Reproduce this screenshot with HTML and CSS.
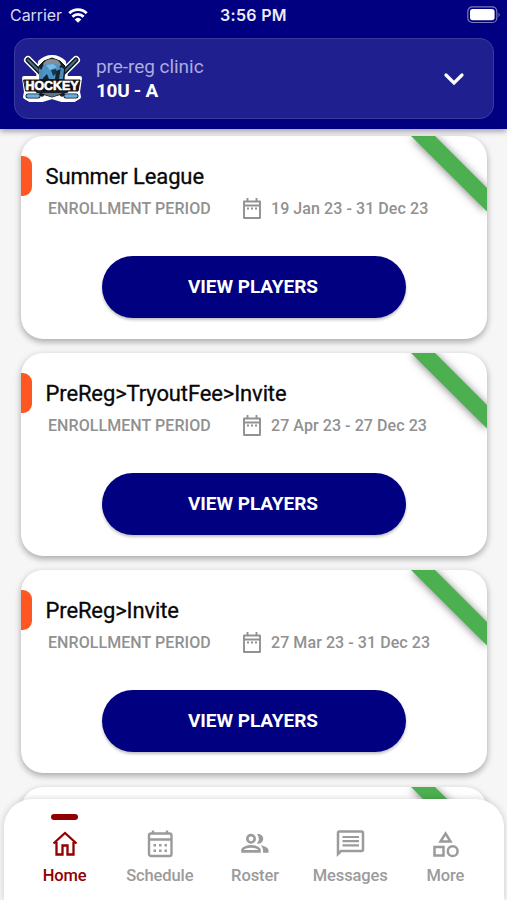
FILE: index.html
```html
<!DOCTYPE html>
<html lang="en">
<head>
<meta charset="utf-8">
<title>Team Home</title>
<link rel="stylesheet" href="styles.css">
</head>
<body>
<svg class="defs" aria-hidden="true">
  <symbol id="ribbon" viewBox="0 0 90 90"><path d="M4 -10 28 -10 100 62 100 85.500Z"/></symbol>
  <symbol id="calendar" viewBox="0 0 18 21"><path d="M1 3.500h16v16.500H1zM1 7.500h16M4.500 3.500V0M13.500 3.500V0" fill="none" stroke="currentColor" stroke-width="1.900" stroke-linejoin="round"/><path d="M4 9.500h2v2H4zM8 9.500h2v2H8zM12 9.500h2v2h-2z" fill="currentColor"/></symbol>
</svg>
<div class="app">
  <header class="header">
    <div class="status">
      <div class="carrier"><span>Carrier</span>
        <svg class="wifi" viewBox="0 0 20 15"><path d="M1.300 5.300a12.300 12.300 0 0 1 17.400 0M4.400 8.700a7.700 7.700 0 0 1 11.200 0" fill="none" stroke="#fff" stroke-width="2.800"/><path d="M6.700 11.400a4.800 4.800 0 0 1 6.600 0L10 14.700z" fill="#fff"/></svg>
      </div>
      <div class="time">3:56 PM</div>
      <svg class="battery" viewBox="0 0 34 18"><rect x=".8" y=".9" width="29" height="15.600" rx="4.500" fill="none" stroke="#7b7bc0" stroke-width="1.200"/><rect x="3" y="3" width="24.600" height="11.300" rx="2.800" fill="#fff"/><path d="M31.500 6.500q2.400 2.300 0 4.600z" fill="#7b7bc0"/></svg>
    </div>
    <div class="team">
      <svg class="logo" viewBox="0 0 62 50">
        <g stroke-linejoin="round" stroke-linecap="round">
          <path d="M7 6 41 40M55 6 21 40" fill="none" stroke="#fff" stroke-width="8"/>
          <path d="M19 8q5-5 12-5t12 5l2 16h14l-2 14 1 5-5 3H41L31 43 21 46H9l-5-3 1-5-2-14h14z" fill="#fff" stroke="#fff" stroke-width="4"/>
          <path d="M7 6 41 40M55 6 21 40M7 42h10M45 42h10" fill="none" stroke="#101820" stroke-width="5"/>
          <path d="M7 6 18 17M55 6 44 17" fill="none" stroke="#417087" stroke-width="2"/>
          <path d="M7 42h10M45 42h10" fill="none" stroke="#68afe0" stroke-width="3.400"/>
          <path d="M18 12 23 7 31 4 39 7 44 12 43 25 47 38 31 43 15 38 19 25z" fill="#17232c" stroke="#101820"/>
          <path d="M22 10q3-5 9-5 7 0 9 6l-3 3H24z" fill="#858f96"/>
          <path d="M22 12q6-4 15-1l3 4-5 2-1 8h-6l-2-5-4 4-2-7z" fill="#4b94c9"/>
          <path d="M25 11l7-1 4 3-7 3z" fill="#7cbce4"/>
          <path d="M30 16l5-1 1 4-4 3z" fill="#16384f"/>
          <path d="M40 13l3 2-1 10h-4zM18 14l4 3v8h-4z" fill="#4b8cb8"/>
          <path d="M20 39h22l-11 4z" fill="#63747e"/>
          <path d="M3 26h56l-2 11H5z" fill="#111" stroke="#111"/>
        </g>
        <text x="31" y="35.500" text-anchor="middle" textLength="53" lengthAdjust="spacingAndGlyphs" class="logo-text">HOCKEY</text>
      </svg>
      <div class="team-copy"><div class="club">pre-reg clinic</div><div class="squad">10U - A</div></div>
      <svg class="chevron" viewBox="0 0 22 14"><path d="M3 3 11 11 19 3" fill="none" stroke="#fff" stroke-width="3.200" stroke-linecap="round"/></svg>
    </div>
  </header>

  <main class="list">
    <article class="card">
      <svg class="ribbon"><use href="#ribbon" width="90" height="90"/></svg>
      <div class="title-row"><i class="marker"></i><h2>Summer League</h2></div>
      <div class="period"><span class="label">ENROLLMENT PERIOD</span><svg class="cal"><use href="#calendar"/></svg><span class="dates">19 Jan 23 - 31 Dec 23</span></div>
      <button class="view">VIEW PLAYERS</button>
    </article>
    <article class="card">
      <svg class="ribbon"><use href="#ribbon" width="90" height="90"/></svg>
      <div class="title-row"><i class="marker"></i><h2>PreReg&gt;TryoutFee&gt;Invite</h2></div>
      <div class="period"><span class="label">ENROLLMENT PERIOD</span><svg class="cal"><use href="#calendar"/></svg><span class="dates">27 Apr 23 - 27 Dec 23</span></div>
      <button class="view">VIEW PLAYERS</button>
    </article>
    <article class="card">
      <svg class="ribbon"><use href="#ribbon" width="90" height="90"/></svg>
      <div class="title-row"><i class="marker"></i><h2>PreReg&gt;Invite</h2></div>
      <div class="period"><span class="label">ENROLLMENT PERIOD</span><svg class="cal"><use href="#calendar"/></svg><span class="dates">27 Mar 23 - 31 Dec 23</span></div>
      <button class="view">VIEW PLAYERS</button>
    </article>
    <article class="card">
      <svg class="ribbon"><use href="#ribbon" width="90" height="90"/></svg>
    </article>
  </main>

  <nav class="tabs">
    <a class="tab active">
      <svg viewBox="0 0 32 32"><path d="M4.500 15.500 16 5l11.500 10.500M7.500 14v12.500h6V17.500h5v9h6V14" fill="none" stroke="currentColor" stroke-width="2.300"/></svg>
      <span>Home</span></a>
    <a class="tab">
      <svg viewBox="0 0 32 32"><rect x="5" y="5.500" width="22.500" height="22.500" rx="2" fill="none" stroke="currentColor" stroke-width="2.400"/><path d="M5 11.500h22.500M9 6V2.500M23 6V2.500" fill="none" stroke="currentColor" stroke-width="2.400"/><path d="M9.500 16H12v2.500H9.500zM15 16h2.500v2.500H15zM20.500 16H23v2.500h-2.500zM9.500 21.500H12V24H9.500zM15 21.500h2.500V24H15zM20.500 21.500H23V24h-2.500z" fill="currentColor"/></svg>
      <span>Schedule</span></a>
    <a class="tab">
      <svg viewBox="0 0 32 32"><circle cx="12" cy="10.800" r="3.700" fill="none" stroke="currentColor" stroke-width="2.600"/><path d="M3.500 23.400v-1.200c0-2.400 5.300-3.800 8.500-3.800s8.500 1.400 8.500 3.800v1.200z" fill="none" stroke="currentColor" stroke-width="2.600"/><path d="M18 15.500a7.500 7.500 0 0 0 0-9.400 4.900 4.900 0 1 1 0 9.400zM21.500 17.200c4 .6 8 2.500 8 5v2.500H24v-2.500c0-2.200-1-3.700-2.500-5z" fill="currentColor"/></svg>
      <span>Roster</span></a>
    <a class="tab">
      <svg viewBox="0 0 32 32"><path d="M4 26V5q0-1.500 1.500-1.500h22Q29 3.500 29 5v16.500q0 1.500-1.500 1.500H7z" fill="none" stroke="currentColor" stroke-width="2.500"/><path d="M8.500 9H25M8.500 13.200H25M8.500 17.400H25" stroke="currentColor" stroke-width="2.200"/></svg>
      <span>Messages</span></a>
    <a class="tab">
      <svg viewBox="0 0 32 32"><path d="M16.500 5.500 21.500 13.500h-10zM5.500 19h9v8.500h-9z" fill="none" stroke="currentColor" stroke-width="2.500"/><circle cx="23.700" cy="23.200" r="4.900" fill="none" stroke="currentColor" stroke-width="2.500"/></svg>
      <span>More</span></a>
  </nav>
</div>
</body>
</html>
```
FILE: styles.css
```css
* { box-sizing: border-box; }
body { margin: 0; font-family: Roboto, sans-serif; }
.defs { position: absolute; width: 0; height: 0; }
.app { position: relative; display: flex; flex-direction: column; width: 507px; height: 900px; overflow: hidden; background: #f6f6f6; }
.header { position: relative; z-index: 2; height: 128.500px; flex: none; background: #000080; box-shadow: 0 2px 6px rgba(0,0,30,.4); color: #fff; }
.status { display: grid; grid-template-columns: 1fr auto 1fr; align-items: center; height: 38px; padding: 0 7px 8px 10px; font-family: Inter, sans-serif; }
.carrier { display: flex; align-items: center; gap: 6px; font-size: 16px; color: #d9d9ee; letter-spacing: -.05px; }
.wifi { width: 20px; height: 15px; }
.time { font-size: 16px; font-weight: 600; color: #ececf8; letter-spacing: .3px; margin-left: -3px; }
.battery { width: 34px; height: 18px; justify-self: end; margin-right: -1px; }
.team { display: flex; align-items: center; width: 480px; height: 81px; margin-left: 14px; padding: 0 28px 0 6px; border: 1px solid #3b3b9e; border-radius: 14px; background: #1f1f8f; }
.logo { width: 62px; height: 50px; }
.logo-text { font: 900 12px "Liberation Sans", sans-serif; fill: #fff; stroke: #fff; stroke-width: .6px; }
.team-copy { flex: 1; margin-left: 13px; }
.club { font-size: 19px; line-height: 24px; color: #acacdf; letter-spacing: -.05px; }
.squad { font-size: 19px; line-height: 24px; font-weight: 700; letter-spacing: -.3px; }
.chevron { width: 22px; height: 14px; }
.list { display: flex; flex-direction: column; gap: 14px; padding: 7.500px 20px 0 21px; }
.card { position: relative; flex: none; height: 203px; border-radius: 22px; background: #fff; box-shadow: 0 3px 6px rgba(0,0,0,.28), 0 1px 10px rgba(0,0,0,.06); padding-top: 20px; }
.ribbon { position: absolute; top: 0; right: 0; width: 90px; height: 90px; overflow: hidden; border-top-right-radius: 22px; fill: #4caf50; }
.ribbon use { filter: drop-shadow(0 1px 4px rgba(0,0,0,.5)); }
.title-row { display: flex; align-items: center; height: 40px; }
.marker { width: 11px; height: 40px; margin-right: 13.500px; background: #ff5722; border-radius: 0 9px 9px 0; }
h2 { margin: 0; font-size: 22px; font-weight: 400; color: #080808; letter-spacing: -.12px; -webkit-text-stroke: .3px #080808; }
.period { display: flex; align-items: center; height: 24px; padding-left: 27px; font-size: 16px; font-weight: 500; color: #919191; letter-spacing: .07px; }
.label { width: 195px; }
.cal { width: 18px; height: 21px; margin-right: 10px; }
.view { display: block; width: 304px; height: 62px; margin: 36px 0 0 81px; padding: 0 2px 1px 0; border: 0; border-radius: 31px; background: #000080; color: #fff; font: 700 19px Roboto, sans-serif; letter-spacing: -.05px; box-shadow: 0 2px 3px rgba(0,0,0,.25); }
.tabs { position: absolute; z-index: 3; left: 4px; right: 3px; bottom: 0; height: 101px; display: flex; padding: 0 11px 0 13px; border-radius: 28px 28px 0 0; background: #fff; box-shadow: 0 0 7px rgba(0,0,0,.18); }
.tab { flex: 1; display: flex; flex-direction: column; align-items: center; padding-top: 29px; color: #9b9b9b; font-size: 16.500px; font-weight: 500; letter-spacing: -.1px; }
.tab svg { width: 32px; height: 32px; flex: none; }
.tab span { line-height: 22px; margin-top: 5px; }
.active { color: #900000; padding-top: 15px; }
.active::before { content: ""; width: 27px; height: 6px; flex: none; margin-bottom: 8px; border-radius: 3px; background: #900000; }
```
